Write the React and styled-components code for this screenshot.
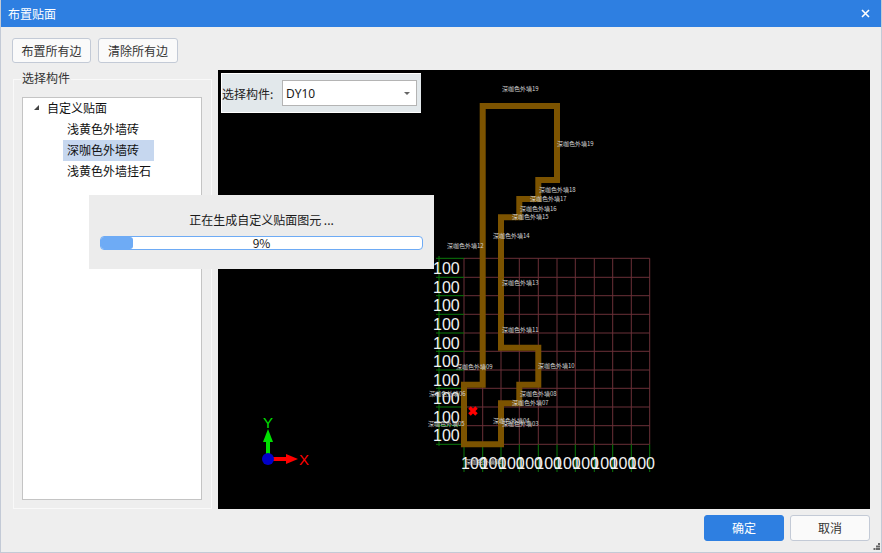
import styled, {createGlobalStyle} from 'styled-components'

const GlobalStyle = createGlobalStyle`
  html, body {
    margin: 0;
    padding: 0;
    background: #eeeeee;
  }
`;

const Window = styled.div`
  position: relative;
  width: 882px;
  height: 553px;
  box-sizing: border-box;
  display: flex;
  flex-direction: column;
  background: #eeeeee;
  border: solid #c3cad6;
  border-width: 0 1px 1px 1px;
  font-family: "Noto Sans CJK SC", "Liberation Sans", sans-serif;
  font-size: 12px;
  color: #222;
  overflow: hidden;
`;

const TitleBar = styled.div`
  height: 27px;
  margin: 0 -1px;
  padding: 0 12px 0 8px;
  flex: none;
  display: flex;
  align-items: center;
  justify-content: space-between;
  background: #2e7fe1;
  color: #fff;
`;

const CloseIcon = styled.svg`
  width: 9px;
  height: 9px;
  display: block;
`;

const Toolbar = styled.div`
  display: flex;
  gap: 7px;
  padding: 11px 0 7px 11px;
`;

const Button = styled.button`
  height: ${props => props.$tall ? `26px` : `25px`};
  width: ${props => props.$wide ? `80px` : `79px`};
  padding: 0;
  box-sizing: border-box;
  border: 1px solid ${props => props.$primary ? `#2e7fe1` : `#c3cad6`};
  border-radius: 3px;
  background: ${props => props.$primary ? `#2e7fe1` : `#fafafa`};
  color: ${props => props.$primary ? `#fff` : `#333`};
  font: inherit;
  line-height: 1;
`;

const Main = styled.div`
  display: flex;
  height: 439px;
  flex: none;
  padding: 0 11px 0 12px;
  gap: 6px;
`;

const Group = styled.fieldset`
  width: 199px;
  height: 430px;
  margin: 9px 0 0;
  padding: 0;
  box-sizing: border-box;
  flex: none;
  position: relative;
  border: 1px solid #f9f9f9;
`;

const GroupTitle = styled.span`
  position: absolute;
  left: 7px;
  top: -11px;
  padding: 0 1px;
  background: #eeeeee;
  line-height: 18px;
  color: #333;
`;

const Tree = styled.div`
  height: 403px;
  margin: 17px 9px 0 8px;
  box-sizing: border-box;
  background: #fff;
  border: 1px solid #c4c4c4;
  color: #111;
`;

const TreeRow = styled.div`
  height: 21px;
  box-sizing: border-box;
  padding-bottom: 2px;
  width: ${props => props.$selected ? `91px` : `fit-content`};
  display: flex;
  align-items: center;
  gap: 7px;
  margin-left: ${props => props.$child ? `40px` : `10px`};
  padding-left: ${props => props.$child ? `4px` : `0`};
  background: ${props => props.$selected ? `#c6d7ef` : `transparent`};
`;

const Caret = styled.svg`
  width: 7px;
  height: 7px;
  display: block;
`;

const Viewport = styled.div`
  position: relative;
  width: 652px;
  height: 439px;
  flex: none;
  background: #000;
`;

const Scene = styled.svg`
  display: block;
  width: 652px;
  height: 439px;
`;

const PickerBar = styled.div`
  position: absolute;
  left: 3px;
  top: 3px;
  width: 200px;
  height: 40px;
  box-sizing: border-box;
  display: flex;
  align-items: center;
  gap: 9px;
  padding: 0 4px 0 1px;
  background: #e2e8eb;
  border: solid #fff;
  border-width: 1px 0 1px 0;
  box-shadow: inset 1px 0 #fff;
`;

const PickerLabel = styled.span`
  flex: none;
  width: 51px;
  white-space: nowrap;
`;

const Select = styled.div`
  width: 135px;
  height: 26px;
  flex: none;
  box-sizing: border-box;
  display: flex;
  align-items: center;
  justify-content: space-between;
  padding: 0 6px 0 3px;
  background: #fff;
  border: 1px solid #b4b4b4;
  color: #1a1a1a;
  font-family: "Noto Sans", "Liberation Sans", sans-serif;
  font-size: 12px;
`;

const SelectArrow = styled.span`
  width: 0;
  height: 0;
  border-left: 3px solid transparent;
  border-right: 3px solid transparent;
  border-top: 3px solid #666;
`;

const ProgressDialog = styled.div`
  position: absolute;
  left: 88px;
  top: 195px;
  width: 345px;
  height: 74px;
  box-sizing: border-box;
  padding: 16px 11px 0;
  background: #ececec;
  color: #1a1a1a;
  text-align: center;
`;

const ProgressLabel = styled.div`
  line-height: 18px;
  height: 25px;
`;

const ProgressTrack = styled.div`
  position: relative;
  height: 14px;
  box-sizing: border-box;
  padding-bottom: 2px;
  display: flex;
  align-items: center;
  justify-content: center;
  background: #fff;
  border: 1px solid #6eabf5;
  border-radius: 4px;
  font-size: 12px;
`;

const ProgressFill = styled.div`
  position: absolute;
  left: 0;
  top: 0;
  bottom: 0;
  background: #6eabf5;
  border-radius: 3px;
`;

const ProgressValue = styled.span`
  position: relative;
`;

const Footer = styled.div`
  display: flex;
  justify-content: flex-end;
  gap: 6px;
  padding: 6px 11px 0 0;
`;

const Grip = styled.svg`
  position: absolute;
  right: 1px;
  bottom: 2px;
  width: 7px;
  height: 7px;
`;

const GridXs = [246, 264.7, 283, 301.3, 320.3, 339, 357.3, 376.3, 394.7, 413.3, 431.7]
const GridYs = [188.3, 207.3, 225.7, 244.3, 263, 281.3, 300, 318.3, 337, 355.7, 374.3]

const wallPath = 'M264.7 36 H339 V110 H320.3 V129 H301.3 V147.3 H283 V277.7 H320.3 V314.7 H301.3 V333.3 H283 V374.3 H246 V314.7 H264.7 Z'

const wallLabels = [
  [284, 19, '深咖色外墙19'],
  [339, 74, '深咖色外墙19'],
  [321, 120, '深咖色外墙18'],
  [312, 129, '深咖色外墙17'],
  [302, 139, '深咖色外墙16'],
  [294, 147, '深咖色外墙15'],
  [275, 166, '深咖色外墙14'],
  [229, 176, '深咖色外墙12'],
  [284, 213, '深咖色外墙13'],
  [284, 260, '深咖色外墙11'],
  [320, 296, '深咖色外墙10'],
  [238, 297, '深咖色外墙09'],
  [302, 324, '深咖色外墙08'],
  [294, 333, '深咖色外墙07'],
  [211, 324, '深咖色外墙06'],
  [210, 354, '深咖色外墙05'],
  [275, 351, '深咖色外墙04'],
  [284, 354, '深咖色外墙03'],
  [247, 392, '深咖色外墙02'],
]

const CadScene = () => (
  <Scene viewBox="0 0 652 439">
    <g stroke="#6b3038" strokeWidth="1" fill="none">
      {GridXs.map(x => <line key={x} x1={x} y1={188.3} x2={x} y2={374.3} />)}
      {GridYs.map(y => <line key={y} x1={246} y1={y} x2={431.7} y2={y} />)}
    </g>
    <g stroke="#0a7a0a" strokeWidth="1" fill="none">
      <line x1={221} y1={186} x2={221} y2={376} />
      {GridYs.map(y => <line key={y} x1={218} y1={y} x2={246} y2={y} />)}
      {GridXs.map(x => <line key={x} x1={x} y1={374.3} x2={x} y2={402} />)}
    </g>
    <path d={wallPath} fill="none" stroke="#7c5300" strokeWidth="6" strokeLinejoin="miter" />
    <g fill="#f2f2f2" fontFamily="'Liberation Sans', sans-serif" fontSize="16">
      {GridYs.slice(0, 10).map(y => <text key={y} x={215} y={y + 15.5}>100</text>)}
      {GridXs.slice(0, 10).map(x => <text key={x} x={x - 3} y={399}>100</text>)}
    </g>
    <g fill="#d4d4d4" fontFamily="'Noto Sans CJK SC', sans-serif" fontSize="6" textAnchor="start">
      {wallLabels.map(([x, y, text], i) => <text key={i} x={x} y={y + 2}>{text}</text>)}
    </g>
    <path d="M251.5 337.5 L258.5 344.5 M258.5 337.5 L251.5 344.5" stroke="#ff0000" strokeWidth="3.5" />
    <rect x={48} y={370} width={4} height={20} fill="#00e000" />
    <path d="M50 359 L55 372 H45 Z" fill="#00e000" />
    <rect x={50} y={387} width={20} height={4} fill="#ff0000" />
    <path d="M80 389 L68 384 V394 Z" fill="#ff0000" />
    <circle cx={50} cy={389} r={6} fill="#0000c8" />
    <text x={50} y={358} textAnchor="middle" fill="#00e000" fontFamily="'Liberation Sans', sans-serif" fontSize="15">Y</text>
    <text x={86} y={395} textAnchor="middle" fill="#ff0000" fontFamily="'Liberation Sans', sans-serif" fontSize="15">X</text>
  </Scene>
)

const App = () => {
  const progress = 9

  return (
    <Window>
      <GlobalStyle />
      <TitleBar>
        布置贴面
        <CloseIcon viewBox="0 0 9 9">
          <path d="M1 1 L8 8 M8 1 L1 8" stroke="#fff" strokeWidth="1.6" />
        </CloseIcon>
      </TitleBar>
      <Toolbar>
        <Button>布置所有边</Button>
        <Button $wide>清除所有边</Button>
      </Toolbar>
      <Main>
        <Group>
          <GroupTitle>选择构件</GroupTitle>
          <Tree>
            <TreeRow>
              <Caret viewBox="0 0 7 7"><path d="M6 1 V6 H1 Z" fill="#444" /></Caret>
              自定义贴面
            </TreeRow>
            <TreeRow $child>浅黄色外墙砖</TreeRow>
            <TreeRow $child $selected>深咖色外墙砖</TreeRow>
            <TreeRow $child>浅黄色外墙挂石</TreeRow>
          </Tree>
        </Group>
        <Viewport>
          <CadScene />
          <PickerBar>
            <PickerLabel>选择构件:</PickerLabel>
            <Select>
              DY10
              <SelectArrow />
            </Select>
          </PickerBar>
        </Viewport>
      </Main>
      <Footer>
        <Button $primary $tall $wide>确定</Button>
        <Button $tall $wide>取消</Button>
      </Footer>
      <ProgressDialog>
        <ProgressLabel>正在生成自定义贴面图元 ...</ProgressLabel>
        <ProgressTrack>
          <ProgressFill style={{width: `${progress * 1.1}%`}} />
          <ProgressValue>{progress}%</ProgressValue>
        </ProgressTrack>
      </ProgressDialog>
      <Grip viewBox="0 0 7 7">
        <path d="M5 0 H7 V2 H5 Z M3 2.5 H5 V4.5 H3 Z M5 2.5 H7 V4.5 H5 Z M0.5 5 H2.5 V7 H0.5 Z M3 5 H5 V7 H3 Z M5 5 H7 V7 H5 Z" fill="#666" />
      </Grip>
    </Window>
  )
}

export default App
